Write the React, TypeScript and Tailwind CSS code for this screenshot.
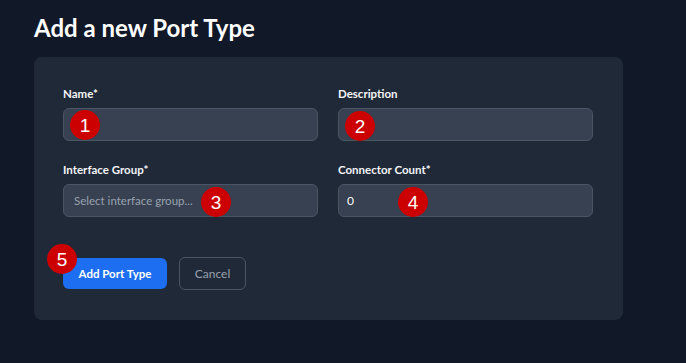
import React from "react";

function Badge({ n, className }: { n: number; className: string }) {
  return (
    <span
      className={`absolute flex h-[30px] w-[30px] items-center justify-center rounded-full bg-[#cc0000] text-[19px] leading-none text-white ${className}`}
      style={{ fontFamily: '"Liberation Sans", Arial, sans-serif' }}
    >
      {n}
    </span>
  );
}

function Field({ label, children }: { label: string; children: React.ReactNode }) {
  return (
    <div className="flex flex-col">
      <label className="mb-1.5 text-[11.5px] font-bold leading-4 text-gray-100">{label}</label>
      {children}
    </div>
  );
}

export default function App() {
  return (
    <main
      className="min-h-screen bg-[#111827] px-[34px] pt-[13px]"
      style={{ fontFamily: 'Lato, "Noto Sans", sans-serif' }}
    >
      <h1 className="mb-[15px] text-[24px] font-bold leading-[29px] text-white">Add a new Port Type</h1>

      <div className="relative w-[589px] rounded-lg bg-[#1f2937] pl-[29px] pr-[30px] pt-[29px] pb-[30px]">
        <div className="grid grid-cols-2 gap-x-5 gap-y-[21px]">
          <Field label="Name*">
            <input className="h-[33px] rounded-md border border-[#4b5563] bg-[#374151] px-2.5 text-[12px] text-white outline-none" />
          </Field>
          <Field label="Description">
            <input className="h-[33px] rounded-md border border-[#4b5563] bg-[#374151] px-2.5 text-[12px] text-white outline-none" />
          </Field>
          <Field label="Interface Group*">
            <div className="flex h-[33px] items-center rounded-md border border-[#4b5563] bg-[#374151] px-2.5 text-[11.5px] text-gray-400">
              Select interface group...
            </div>
          </Field>
          <Field label="Connector Count*">
            <input
              defaultValue="0"
              className="h-[33px] rounded-md border border-[#4b5563] bg-[#374151] px-2 text-[12px] text-white outline-none"
            />
          </Field>
        </div>

        <div className="mt-10 flex items-center gap-3">
          <button className="h-[31px] w-[104px] rounded-md bg-[#1d6ef0] text-[11.5px] font-bold text-white">
            Add Port Type
          </button>
          <button className="h-[33px] w-[67px] rounded-md border border-[#4b5563] text-[12px] text-gray-400">
            Cancel
          </button>
        </div>

        <Badge n={1} className="left-[36px] top-[53px]" />
        <Badge n={2} className="left-[311px] top-[54px]" />
        <Badge n={3} className="left-[167px] top-[130px]" />
        <Badge n={4} className="left-[364px] top-[130px]" />
        <Badge n={5} className="left-[13px] top-[187px]" />
      </div>
    </main>
  );
}
